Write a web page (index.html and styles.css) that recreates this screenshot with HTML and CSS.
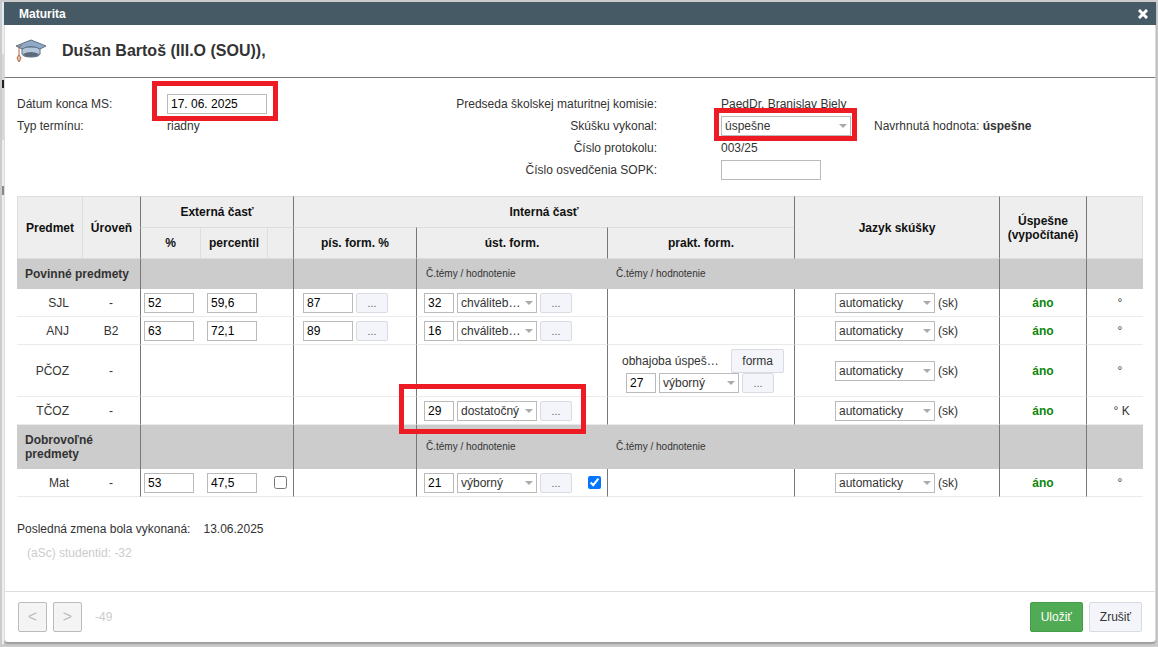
FILE: index.html
```
<!DOCTYPE html>
<html lang="sk">

    <head>
        <meta charset="UTF-8">
        <meta name="viewport" content="width=device-width, initial-scale=1.0">
        <title>Maturita</title>
        <link rel="stylesheet" href="styles.css">
    </head>

    <body>
        <div class="dialog" role="dialog" aria-labelledby="dialogTitle">
            <div class="titlebar">
                <span id="dialogTitle">Maturita</span>
                <button type="button" class="close" aria-label="Zavrieť">
                    <svg width="10" height="10" viewBox="0 0 10 10"><path d="M2 2 L8 8 M8 2 L2 8" stroke="#fff" stroke-width="3" stroke-linecap="square"/></svg>
                </button>
            </div>

            <header class="student">
                <svg class="cap" width="32" height="26" viewBox="0 0 32 26">
                    <path d="M7 9 V16 Q8 19 16 19 Q24 19 25 16 V9 Z" fill="#b4c6da" stroke="#5f7386" stroke-width="1"/>
                    <path d="M8 16 Q16 12 24 16 Q23 19 16 19 Q9 19 8 16 Z" fill="#5b6b7c"/>
                    <path d="M1 8 L16 2 L31 8 L25 11 Q16 6 7 11 Z" fill="#8faac6" stroke="#5c7084" stroke-width="1" stroke-linejoin="round"/>
                    <path d="M7 7 L4 9 V18" stroke="#a5674a" stroke-width="1" fill="none"/>
                    <path d="M4 17 L6 20 L4 24 L2 20 Z" fill="#f0c0a0" stroke="#b06a46" stroke-width="1"/>
                </svg>
                <h1>Dušan Bartoš (III.O (SOU)),</h1>
            </header>

            <form class="content" id="maturita">
                <div class="info">
                    <label for="datum">Dátum konca MS:</label>
                    <div><span class="mark mark-date"><input class="field w100" type="text" id="datum" value="17. 06. 2025"></span></div>
                    <span class="right">Predseda školskej maturitnej komisie:</span>
                    <div class="value">PaedDr. Branislav Biely</div>

                    <span>Typ termínu:</span>
                    <div>riadny</div>
                    <label class="right" for="vykonal">Skúšku vykonal:</label>
                    <div class="value">
                        <span class="select w130 mark mark-result"><select id="vykonal"><option>úspešne</option></select></span>
                        <span class="proposal">Navrhnutá hodnota: <b>úspešne</b></span>
                    </div>

                    <span class="right row3">Číslo protokolu:</span>
                    <div class="value">003/25</div>

                    <label class="right row4" for="sopk">Číslo osvedčenia SOPK:</label>
                    <div class="value"><input class="field w100" type="text" id="sopk"></div>
                </div>

                <table class="exams">
                    <colgroup>
                        <col class="c-subject"><col class="c-level"><col class="c-pct"><col class="c-perc"><col class="c-check">
                        <col class="c-written"><col class="c-oral"><col class="c-pract"><col><col class="c-ok"><col class="c-note">
                    </colgroup>
                    <thead>
                        <tr>
                            <th rowspan="2">Predmet</th>
                            <th rowspan="2">Úroveň</th>
                            <th class="line" colspan="3">Externá časť</th>
                            <th class="line" colspan="3">Interná časť</th>
                            <th class="line" rowspan="2">Jazyk skúšky</th>
                            <th class="line" rowspan="2">Úspešne (vypočítané)</th>
                            <th class="line" rowspan="2"></th>
                        </tr>
                        <tr>
                            <th class="line">%</th>
                            <th>percentil</th>
                            <th></th>
                            <th class="line">pís. form. %</th>
                            <th class="line">úst. form.</th>
                            <th class="line">prakt. form.</th>
                        </tr>
                    </thead>
                    <tbody>
                        <tr class="group">
                            <th colspan="2">Povinné predmety</th>
                            <td class="line" colspan="3"></td>
                            <td class="line"></td>
                            <td class="line hint">Č.témy / hodnotenie</td>
                            <td class="hint" colspan="2">Č.témy / hodnotenie</td>
                            <td class="line"></td>
                            <td class="line"></td>
                        </tr>
                        <tr>
                            <td class="subject">SJL</td>
                            <td class="level">-</td>
                            <td class="line"><input class="field w50" type="text" aria-label="SJL %" value="52"></td>
                            <td class="perc"><input class="field w50" type="text" aria-label="SJL percentil" value="59,6"></td>
                            <td></td>
                            <td class="line"><div class="group-fields written"><input class="field w50" type="text" aria-label="SJL písomná forma" value="87"><button type="button" class="more">...</button></div></td>
                            <td class="line"><div class="group-fields"><input class="field w30" type="text" aria-label="SJL číslo témy" value="32"><span class="select w80"><select aria-label="SJL hodnotenie"><option>chváliteb…</option></select></span><button type="button" class="more">...</button></div></td>
                            <td class="line"></td>
                            <td class="line"><div class="group-fields lang"><span class="select w100"><select aria-label="SJL jazyk"><option>automaticky</option></select></span>(sk)</div></td>
                            <td class="line yes">áno</td>
                            <td class="line note">°</td>
                        </tr>
                        <tr>
                            <td class="subject">ANJ</td>
                            <td class="level">B2</td>
                            <td class="line"><input class="field w50" type="text" aria-label="ANJ %" value="63"></td>
                            <td class="perc"><input class="field w50" type="text" aria-label="ANJ percentil" value="72,1"></td>
                            <td></td>
                            <td class="line"><div class="group-fields written"><input class="field w50" type="text" aria-label="ANJ písomná forma" value="89"><button type="button" class="more">...</button></div></td>
                            <td class="line"><div class="group-fields"><input class="field w30" type="text" aria-label="ANJ číslo témy" value="16"><span class="select w80"><select aria-label="ANJ hodnotenie"><option>chváliteb…</option></select></span><button type="button" class="more">...</button></div></td>
                            <td class="line"></td>
                            <td class="line"><div class="group-fields lang"><span class="select w100"><select aria-label="ANJ jazyk"><option>automaticky</option></select></span>(sk)</div></td>
                            <td class="line yes">áno</td>
                            <td class="line note">°</td>
                        </tr>
                        <tr class="tall">
                            <td class="subject">PČOZ</td>
                            <td class="level">-</td>
                            <td class="line"></td>
                            <td></td>
                            <td></td>
                            <td class="line"></td>
                            <td class="line"></td>
                            <td class="line">
                                <div class="practical">
                                    <span>obhajoba úspeš…</span>
                                    <button type="button" class="btn small">forma</button>
                                </div>
                                <div class="group-fields pract"><input class="field w30" type="text" aria-label="PČOZ číslo témy" value="27"><span class="select w80"><select aria-label="PČOZ hodnotenie"><option>výborný</option></select></span><button type="button" class="more">...</button></div>
                            </td>
                            <td class="line"><div class="group-fields lang"><span class="select w100"><select aria-label="PČOZ jazyk"><option>automaticky</option></select></span>(sk)</div></td>
                            <td class="line yes">áno</td>
                            <td class="line note">°</td>
                        </tr>
                        <tr>
                            <td class="subject">TČOZ</td>
                            <td class="level">-</td>
                            <td class="line"></td>
                            <td></td>
                            <td></td>
                            <td class="line"></td>
                            <td class="line"><div class="group-fields mark mark-oral"><input class="field w30" type="text" aria-label="TČOZ číslo témy" value="29"><span class="select w80"><select aria-label="TČOZ hodnotenie"><option>dostatočný</option></select></span><button type="button" class="more">...</button></div></td>
                            <td class="line"></td>
                            <td class="line"><div class="group-fields lang"><span class="select w100"><select aria-label="TČOZ jazyk"><option>automaticky</option></select></span>(sk)</div></td>
                            <td class="line yes">áno</td>
                            <td class="line note">&nbsp;° K</td>
                        </tr>
                        <tr class="group double">
                            <th colspan="2">Dobrovoľné<br>predmety</th>
                            <td class="line" colspan="3"></td>
                            <td class="line"></td>
                            <td class="line hint">Č.témy / hodnotenie</td>
                            <td class="hint" colspan="2">Č.témy / hodnotenie</td>
                            <td class="line"></td>
                            <td class="line"></td>
                        </tr>
                        <tr>
                            <td class="subject">Mat</td>
                            <td class="level">-</td>
                            <td class="line"><input class="field w50" type="text" aria-label="Mat %" value="53"></td>
                            <td class="perc"><input class="field w50" type="text" aria-label="Mat percentil" value="47,5"></td>
                            <td class="perc"><input class="check" type="checkbox" aria-label="Mat externá časť"></td>
                            <td class="line"></td>
                            <td class="line"><div class="group-fields"><input class="field w30" type="text" aria-label="Mat číslo témy" value="21"><span class="select w80"><select aria-label="Mat hodnotenie"><option>výborný</option></select></span><button type="button" class="more">...</button><input class="check oral-check" type="checkbox" aria-label="Mat interná časť" checked></div></td>
                            <td class="line"></td>
                            <td class="line"><div class="group-fields lang"><span class="select w100"><select aria-label="Mat jazyk"><option>automaticky</option></select></span>(sk)</div></td>
                            <td class="line yes">áno</td>
                            <td class="line note">°</td>
                        </tr>
                    </tbody>
                </table>

                <p class="changed"><span>Posledná zmena bola vykonaná:</span><span>13.06.2025</span></p>
                <p class="debug">(aSc) studentid: -32</p>
            </form>

            <footer class="footer">
                <button type="button" class="nav" disabled>&lt;</button>
                <button type="button" class="nav" disabled>&gt;</button>
                <span class="position">-49</span>
                <button type="submit" form="maturita" class="btn save">Uložiť</button>
                <button type="button" class="btn">Zrušiť</button>
            </footer>
        </div>
    </body>

</html>
```
FILE: styles.css
```
* {
    box-sizing: border-box;
}

body {
    margin: 0;
    padding: 2px 2px 4px 4px;
    min-height: 100vh;
    display: flex;
    background: #ccc;
    color: #333;
    font: 12px/14px "Liberation Sans", Arial, sans-serif;
}

/* edge of the page under the dialog */
body::before {
    content: "";
    position: absolute;
    top: 2px;
    bottom: 3px;
    left: 2px;
    width: 2px;
    background: linear-gradient(#dfeaf2 23px, #eee 23px 52px, #d8d8d8 52px 78px, #222 78px 86px, #d8d8d8 86px 138px, #eee 138px 184px, #888 184px 193px, #eee 193px);
}

input,
select,
button {
    margin: 0;
    font: inherit;
}

.dialog {
    flex: 1;
    min-width: 0;
    display: flex;
    flex-direction: column;
    margin-bottom: 1px;
    background: #fff;
    border-radius: 0 0 4px 4px;
    box-shadow: 0 2px 2px #999;
}

.student,
.content,
.footer {
    border: 0 solid #ddd;
    border-width: 0 1px;
}

.titlebar {
    display: flex;
    align-items: center;
    justify-content: space-between;
    height: 23px;
    padding: 0 8px 0 15px;
    background: #455a64;
    color: #fff;
    font-weight: bold;
}

.close {
    display: flex;
    padding: 0;
    border: 0;
    background: none;
}

.student {
    display: flex;
    align-items: center;
    gap: 15px;
    height: 53px;
    padding-left: 10px;
    border-bottom: 1px solid #777;
}

.student h1 {
    margin: 0;
    font-size: 16px;
    line-height: 20px;
}

.content {
    flex: 1;
    padding: 15px 12px 0;
}

/* basic data above the table */
.info {
    display: grid;
    grid-template-columns: 150px 1fr 200px 486px;
    grid-auto-rows: 22px;
    align-items: center;
    margin-bottom: 15px;
}

.right {
    justify-self: end;
    white-space: nowrap;
}

.row3,
.row4 {
    grid-column: 3;
}

.value {
    display: flex;
    align-items: center;
    padding-left: 64px;
}

.proposal {
    margin-left: 23px;
}

.field {
    display: block;
    height: 20px;
    padding: 0 3px;
    border: 1px solid #bbb;
    background: #fff;
    color: #000;
}

.w30 { width: 30px; }
.w50 { width: 50px; }
.w80 { width: 80px; }
.w100 { width: 100px; }
.w130 { width: 130px; }

.select {
    position: relative;
    display: block;
    height: 20px;
}

.select select {
    appearance: none;
    width: 100%;
    height: 20px;
    padding: 0 12px 0 3px;
    border: 1px solid #bbb;
    border-radius: 0;
    background: #fff;
    color: #333;
}

.select::after {
    content: "";
    position: absolute;
    top: 8px;
    right: 4px;
    border: 4px solid transparent;
    border-top-color: #aaa;
    border-bottom: 0;
    pointer-events: none;
}

/* red frames */
.mark {
    position: relative;
    width: fit-content;
}

.w130.mark {
    width: 130px;
}

span.mark {
    display: block;
}

.mark::before {
    content: "";
    position: absolute;
    z-index: 1;
    border: 5px solid #ed1c24;
    pointer-events: none;
}

.mark-date::before {
    inset: -13px -11px -7px -15px;
}

.mark-result::before {
    inset: -8px -6px -5px -7px;
}

.mark-oral::before {
    inset: -17px -14px -13px -25px;
}

.exams {
    width: 100%;
    table-layout: fixed;
    border-collapse: separate;
    border-spacing: 0;
}

.c-subject { width: 65px; }
.c-level { width: 58px; }
.c-pct { width: 60px; }
.c-perc { width: 67px; }
.c-check { width: 26px; }
.c-written { width: 123px; }
.c-oral { width: 191px; }
.c-pract { width: 187px; }
.c-ok { width: 87px; }
.c-note { width: 57px; }

.exams th,
.exams td {
    padding: 0;
}

.exams thead th {
    height: 31px;
    border: 0 solid #ddd;
    border-width: 1px 0 0 1px;
    background: #eee;
    color: #111;
}

.exams thead th[rowspan],
.exams thead tr + tr th {
    border-bottom-width: 1px;
}

.exams thead tr + tr th {
    height: 32px;
}

.exams thead th[rowspan]:last-child {
    border-right-width: 1px;
}

.exams td {
    height: 28px;
    border-bottom: 1px solid #eaeaea;
}

.exams td.line {
    padding-left: 3px;
    border-left: 1px solid #777;
}

.exams thead .line {
    border-left-color: #777;
}

.exams .group th,
.exams .group td {
    height: 30px;
    border-bottom: 0;
    background: #ccc;
    text-align: left;
}

.exams .group th {
    padding-left: 8px;
}

.exams .double th,
.exams .double td {
    height: 44px;
}

.exams .tall td {
    height: 52px;
}

.exams td.hint {
    padding-left: 9px;
    font-size: 10px;
}

.exams .subject {
    padding-right: 13px;
    text-align: right;
}

.exams .level,
.exams .yes,
.exams .note {
    text-align: center;
}

.exams .perc {
    padding-left: 7px;
}

.exams td.yes {
    padding-left: 0;
    color: #0a870a;
    font-weight: bold;
}

.exams td.note {
    padding-left: 10px;
}

.group-fields {
    display: flex;
    align-items: center;
    gap: 3px;
    margin-left: 4px;
}

.group-fields.written {
    margin-left: 6px;
}

.group-fields.pract {
    margin-left: 15px;
}

.group-fields.lang {
    margin-left: 37px;
}

.more,
.btn {
    border: 1px solid #d9dbe3;
    border-radius: 2px;
    background: #f4f5fb;
    color: #333;
}

.more {
    width: 32px;
    height: 20px;
    padding: 0;
    color: #666;
    font-size: 11px;
}

.practical {
    display: flex;
    align-items: center;
    justify-content: space-between;
    padding: 0 10px 0 11px;
    white-space: nowrap;
}

.check {
    display: block;
    width: 13px;
    height: 13px;
}

.oral-check {
    margin-left: 13px;
}

.changed {
    display: flex;
    gap: 13px;
    margin: 25px 0 10px;
}

.debug {
    margin: 0 0 0 10px;
    color: #ccc;
}

.footer {
    display: flex;
    align-items: center;
    gap: 6px;
    height: 51px;
    padding: 0 13px;
    border-top-width: 1px;
    border-radius: 0 0 4px 4px;
}

.nav {
    width: 29px;
    height: 30px;
    padding: 0;
    border: 1px solid #bbb;
    border-radius: 2px;
    background: #f4f4f4;
    color: #bbb;
    font-size: 16px;
}

.position {
    flex: 1;
    margin-left: 7px;
    color: #ccc;
}

.btn {
    height: 30px;
    padding: 0 10px;
}

.btn.small {
    height: 24px;
}

.btn.save {
    border-color: #449d48;
    background: #50ab54;
    color: #fff;
}
```
